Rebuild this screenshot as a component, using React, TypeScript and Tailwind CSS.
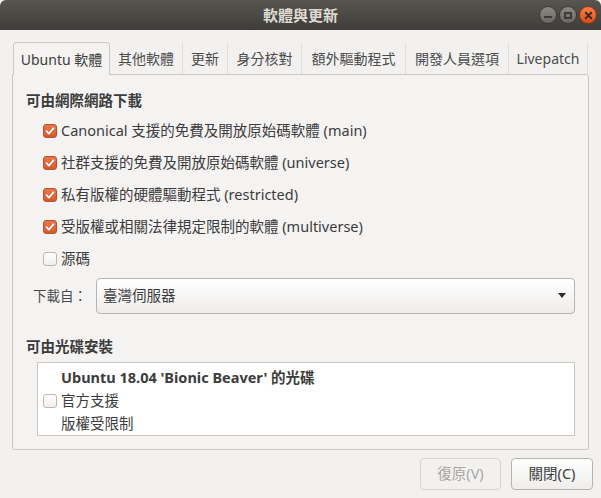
import { useState } from "react";

const FONT = { fontFamily: '"Noto Sans", "Noto Sans CJK TC", sans-serif' };

interface CheckProps {
  checked: boolean;
}

function Check({ checked }: CheckProps) {
  return checked ? (
    <span className="flex items-center justify-center w-[14px] h-[14px] rounded-[3px] border border-[#b4502c] bg-gradient-to-b from-[#e8774c] to-[#d45a31] shrink-0">
      <svg viewBox="0 0 14 14" className="w-[12px] h-[12px]">
        <path d="M3 7.2 L5.8 10 L11 4" fill="none" stroke="white" strokeWidth="2" strokeLinecap="round" strokeLinejoin="round" />
      </svg>
    </span>
  ) : (
    <span className="w-[14px] h-[14px] rounded-[3px] border border-[#bcb7b1] bg-gradient-to-b from-white to-[#f0efee] shrink-0" />
  );
}

const sources = [
  { label: "Canonical 支援的免費及開放原始碼軟體 (main)", on: true },
  { label: "社群支援的免費及開放原始碼軟體 (universe)", on: true },
  { label: "私有版權的硬體驅動程式 (restricted)", on: true },
  { label: "受版權或相關法律規定限制的軟體 (multiverse)", on: true },
  { label: "源碼", on: false },
];

const tabs = [
  { name: "Ubuntu 軟體", w: "w-[97px]" },
  { name: "其他軟體", w: "w-[73px]" },
  { name: "更新", w: "w-[45px]" },
  { name: "身分核對", w: "w-[74px]" },
  { name: "額外驅動程式", w: "w-[104px]" },
  { name: "開發人員選項", w: "w-[103px]" },
  { name: "Livepatch", w: "w-[79px]" },
];

export default function App() {
  const [active] = useState(0);

  return (
    <div className="w-[601px] h-[498px] bg-[#f2f1f0] flex flex-col text-[#3c3c3c]" style={FONT}>
      {/* title bar */}
      <div className="h-[30px] shrink-0 flex items-center justify-center relative bg-gradient-to-b from-[#57554f] to-[#3e3d39] rounded-t-[6px]">
        <span className="text-[15px] font-bold text-[#dfdbd2]">軟體與更新</span>
        <div className="absolute right-[4px] top-[6px] flex gap-[2px]">
          <span className="w-[18px] h-[18px] rounded-full bg-gradient-to-b from-[#8c8a85] to-[#6a6864] border border-[#3a3935] flex items-center justify-center">
            <span className="w-[8px] h-[2px] bg-[#3c3b37] mt-[4px]" />
          </span>
          <span className="w-[18px] h-[18px] rounded-full bg-gradient-to-b from-[#8c8a85] to-[#6a6864] border border-[#3a3935] flex items-center justify-center">
            <span className="w-[8px] h-[7px] border-2 border-[#3c3b37]" />
          </span>
          <span className="w-[18px] h-[18px] rounded-full bg-gradient-to-b from-[#f4804f] to-[#df4a16] border border-[#8f3212] flex items-center justify-center">
            <svg viewBox="0 0 10 10" className="w-[9px] h-[9px]">
              <path d="M2 2 L8 8 M8 2 L2 8" stroke="#3c2a22" strokeWidth="2.2" strokeLinecap="round" />
            </svg>
          </span>
        </div>
      </div>

      {/* tabs */}
      <div className="flex pl-[13px] mt-[12px] h-[32px] shrink-0 relative z-10">
        {tabs.map((t, i) =>
          i === active ? (
            <div
              key={t.name}
              className={`${t.w} h-[33px] flex items-center justify-center text-[14px] bg-[#f4f3f2] border border-b-0 border-[#cdc7c2] rounded-t-[4px] text-[#3c3c3c]`}
            >
              {t.name}
            </div>
          ) : (
            <div
              key={t.name}
              className={`${t.w} h-[31px] mt-[1px] flex items-center justify-center text-[14px] text-[#4c4c4c] border-r border-[#e2dfdb]`}
            >
              {t.name}
            </div>
          )
        )}
      </div>

      {/* panel */}
      <div className="mx-[12px] w-[577px] h-[376px] border border-[#cdc7c2] rounded-b-[3px] rounded-tr-[3px] bg-[#f4f3f2] flex flex-col pl-[13px] pr-[12px]">
        <div className="mt-[15px] text-[14.5px] font-bold text-[#3c3c3c]">可由網際網路下載</div>
        <div className="flex flex-col mt-[3px] pl-[17px]">
          {sources.map((s) => (
            <div key={s.label} className="h-[32px] flex items-center gap-[4px] text-[14.5px]">
              <Check checked={s.on} />
              <span>{s.label}</span>
            </div>
          ))}
        </div>

        <div className="flex items-center mt-[3px] pl-[7px]">
          <span className="w-[63px] text-[13.5px] text-[#4a4a4a]">下載自：</span>
          <div className="flex-1 h-[36px] rounded-[4px] border border-[#b9b3ad] bg-gradient-to-b from-white to-[#eeedeb] flex items-center justify-between px-[6px] mr-[1px]">
            <span className="text-[14.5px]">臺灣伺服器</span>
            <svg viewBox="0 0 8 5" className="w-[8px] h-[5px] mr-[2px]">
              <path d="M0 0 H8 L4 5 Z" fill="#2e2e2e" />
            </svg>
          </div>
        </div>

        <div className="mt-[22px] text-[14.5px] font-bold">可由光碟安裝</div>
        <div className="mt-[4px] ml-[11px] mr-[1px] h-[74px] bg-white border border-[#cdc7c2] flex items-center pl-[5px] pt-[4px] gap-[4px]">
          <Check checked={false} />
          <div className="flex flex-col text-[14.5px] leading-[23px]">
            <span className="font-bold">Ubuntu 18.04 'Bionic Beaver' 的光碟</span>
            <span>官方支援</span>
            <span>版權受限制</span>
          </div>
        </div>
      </div>

      {/* buttons */}
      <div className="flex justify-end gap-[10px] mt-[8px] pr-[8px]">
        <button className="w-[81px] h-[32px] rounded-[4px] border border-[#d8d4d0] bg-[#f2f1f0] text-[14.5px] text-[#a9a6a2]">
          復原(V)
        </button>
        <button className="w-[82px] h-[32px] rounded-[4px] border border-[#b9b3ad] bg-gradient-to-b from-white to-[#eeedeb] text-[14.5px] text-[#3c3c3c]">
          關閉(C)
        </button>
      </div>
    </div>
  );
}
